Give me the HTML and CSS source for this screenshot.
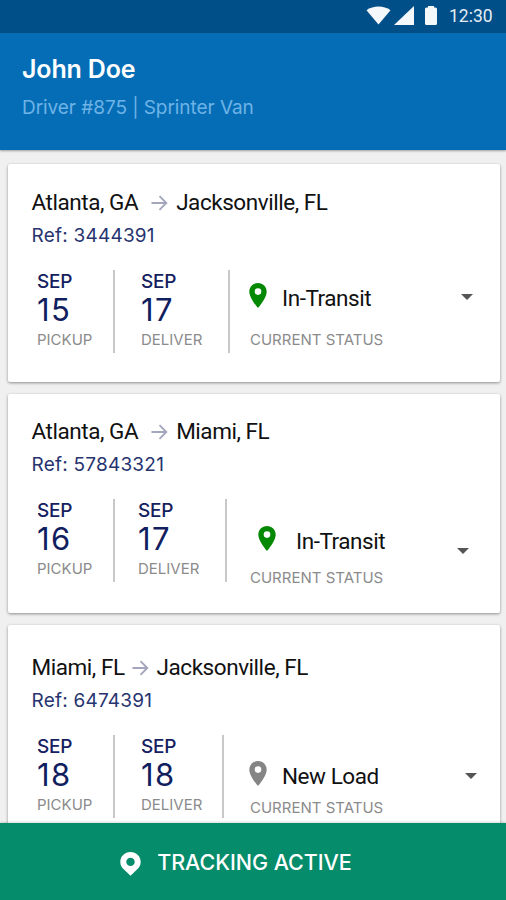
FILE: index.html
```html
<!DOCTYPE html>
<html lang="en">
<head>
<meta charset="utf-8">
<title>Driver loads</title>
<link rel="stylesheet" href="styles.css">
</head>
<body>
<svg width="0" height="0" class="defs" aria-hidden="true">
  <symbol id="pin" viewBox="0 0 18 25"><path fill-rule="evenodd" d="M9 0C4 0 .3 3.900.3 8.700.3 15.200 9 25 9 25s8.700-9.800 8.700-16.300C17.700 3.900 14 0 9 0zm0 5.300a3.300 3.300 0 1 1 0 6.600 3.300 3.300 0 0 1 0-6.600z"/></symbol>
  <symbol id="arrow" viewBox="0 0 17 16"><path d="M.5 8H15M8.500 1.200 15.300 8l-6.800 6.800" fill="none" stroke="currentColor" stroke-width="1.900"/></symbol>
</svg>
<div class="screen">
  <div class="statusbar">
    <svg width="25" height="19" viewBox="0 0 26 20" preserveAspectRatio="none"><path d="M.5 4.500C7.500-.8 18.500-.8 25.500 4.500L13 19.500z"/></svg>
    <svg class="signal" width="20" height="19" viewBox="0 0 20 20" preserveAspectRatio="none"><path d="M20 0v20H0z"/></svg>
    <svg class="battery" width="12" height="19" viewBox="0 0 12 19"><path d="M3 0h6v1.500h1.500Q12 1.500 12 3V17.500q0 1.500-1.500 1.500h-9Q0 19 0 17.500V3q0-1.500 1.500-1.500H3z"/></svg>
    <span class="time">12:30</span>
  </div>
  <header class="header">
    <h1>John Doe</h1>
    <p>Driver #875 | Sprinter Van</p>
  </header>
  <main class="loads">
    <article class="card first">
      <h2><span>Atlanta, GA</span><svg class="arrow wide"><use href="#arrow"/></svg><span>Jacksonville, FL</span></h2>
      <p class="ref">Ref: 3444391</p>
      <div class="details">
        <div class="date"><b>SEP</b><strong>15</strong><small>PICKUP</small></div>
        <div class="date deliver"><b>SEP</b><strong>17</strong><small>DELIVER</small></div>
        <div class="status">
          <div class="state"><svg class="pin"><use href="#pin"/></svg><span>In-Transit</span><i class="caret"></i></div>
          <small>CURRENT STATUS</small>
        </div>
      </div>
    </article>
    <article class="card second">
      <h2><span>Atlanta, GA</span><svg class="arrow wide"><use href="#arrow"/></svg><span>Miami, FL</span></h2>
      <p class="ref">Ref: 57843321</p>
      <div class="details">
        <div class="date"><b>SEP</b><strong>16</strong><small>PICKUP</small></div>
        <div class="date deliver"><b>SEP</b><strong>17</strong><small>DELIVER</small></div>
        <div class="status">
          <div class="state"><svg class="pin"><use href="#pin"/></svg><span>In-Transit</span><i class="caret"></i></div>
          <small>CURRENT STATUS</small>
        </div>
      </div>
    </article>
    <article class="card third">
      <h2><span>Miami, FL</span><svg class="arrow"><use href="#arrow"/></svg><span>Jacksonville, FL</span></h2>
      <p class="ref">Ref: 6474391</p>
      <div class="details">
        <div class="date"><b>SEP</b><strong>18</strong><small>PICKUP</small></div>
        <div class="date deliver"><b>SEP</b><strong>18</strong><small>DELIVER</small></div>
        <div class="status">
          <div class="state"><svg class="pin"><use href="#pin"/></svg><span>New Load</span><i class="caret"></i></div>
          <small>CURRENT STATUS</small>
        </div>
      </div>
    </article>
  </main>
  <footer class="tracking">
    <svg width="21" height="24" viewBox="0 0 21 24"><path fill-rule="evenodd" d="M10.500 0C4.700 0 .3 4.400.3 9.900c0 3.300 1.500 5.700 3.700 7.700l6.500 6.100 6.500-6.100c2.200-2 3.700-4.400 3.700-7.700C20.700 4.400 16.300 0 10.500 0zm0 5.700a4.200 4.200 0 1 1 0 8.400 4.200 4.200 0 0 1 0-8.400z"/></svg>
    <span>TRACKING ACTIVE</span>
  </footer>
</div>
</body>
</html>
```
FILE: styles.css
```css
* { box-sizing: border-box; margin: 0; padding: 0; }
body { font-family: Inter, "Liberation Sans", sans-serif; background: #f0f0f1; }
.defs { display: none; }
.screen { width: 506px; height: 900px; display: flex; flex-direction: column; overflow: hidden; }

.statusbar { height: 33px; flex: none; display: flex; align-items: flex-start; padding: 6px 13px 0 0; justify-content: flex-end; background: #004f88; }
.statusbar svg { fill: #f4f8fb; }
.statusbar .signal { margin-left: 3px; }
.statusbar .battery { margin: 0 0 0 11px; }
.time { margin-left: 12px; width: 44px; font: 17.5px/20px Roboto, sans-serif; color: #e4edf4; white-space: nowrap; }

.header { height: 117px; flex: none; padding: 20px 22px 0; background: #056db6; box-shadow: 0 1px 2px rgba(0, 0, 0, .35); z-index: 1; }
.header h1 { font-size: 25px; line-height: 32px; font-weight: 600; letter-spacing: -.15px; color: #fff; }
.header p { margin-top: 11px; font-size: 19px; line-height: 24px; letter-spacing: -.06px; color: #6db3e6; white-space: nowrap; }

.loads { flex: 1; min-height: 0; overflow: hidden; padding: 14px 6px 0 8px; display: flex; flex-direction: column; gap: 12px; }
.card { --split: 115px; --indent: 26px; --pin-left: 19px; --state-top: 11px; --text-gap: 15px; --caret: 27px; --label-top: 17px;
  flex: none; height: 218px; padding: 24px 0 0 24px; background: #fff; border-radius: 2px; box-shadow: 0 1px 3px rgba(0, 0, 0, .42); }
.card h2 { display: flex; align-items: center; height: 28px; margin-left: -.5px; font: 400 22.5px/28px Roboto, sans-serif; letter-spacing: -.45px; color: #111; white-space: nowrap; }
.arrow { width: 17px; height: 16px; margin: 1px 8px 0 7px; color: #a3a6bd; }
.arrow.wide { margin-left: 13px; margin-right: 8px; }
.ref { margin-top: 8px; margin-left: -.5px; font-size: 19px; line-height: 24px; letter-spacing: .22px; color: #27346f; }
.details { display: flex; height: 83px; margin-top: 22px; }
.date { width: 83px; padding-left: 5px; border-right: 2px solid #c8c8ca; display: flex; flex-direction: column; align-items: flex-start; flex: none; }
.date.deliver { width: var(--split); padding-left: var(--indent); }
.date b { margin-top: 1px; font-size: 19px; font-weight: 500; line-height: 22px; color: #15215f; letter-spacing: -.2px; }
.date strong { font-size: 31px; font-weight: 400; line-height: 34px; color: #10205f; letter-spacing: 1.5px; }
.date small { margin-top: 3px; }
small { font-size: 15px; line-height: 20px; color: #8b8b8b; white-space: nowrap; }
.status { flex: 1; }
.status small { display: block; padding-left: var(--label-left, 20px); margin-top: var(--label-top); }
.state { display: flex; align-items: center; height: 32px; margin-top: var(--state-top); padding: 0 var(--caret) 0 var(--pin-left); font: 22.5px/32px Roboto, sans-serif; letter-spacing: -.45px; color: #111; white-space: nowrap; }
.state span { position: relative; top: .5px; }
.pin { width: 18px; height: 25px; margin: 0 var(--text-gap) 3px 0; fill: #058905; flex: none; }
.caret { margin: var(--caret-top, -1px) 0 0 auto; border: 6.5px solid transparent; border-top-color: #555; border-bottom: 0; }
.second { --split: 112px; --indent: 23px; --pin-left: 31px; --state-top: 25px; --text-gap: 20px; --caret: 31px; --caret-top: 21px; --label-left: 23px; --label-top: 12px; }
.second { height: 219px; }
.second h2 { margin-top: -1px; }
.third { --split: 109px; --pin-left: 25px; --state-top: 24px; --caret: 23px; --caret-top: 1px; --label-left: 26px; --label-top: 7px; padding-top: 28px; }
.third .pin { fill: #858585; }

.tracking { height: 77px; flex: none; display: flex; justify-content: center; padding: 26px 43px 0 0; background: #058c6b; box-shadow: 0 -1px 2px rgba(0, 0, 0, .15); z-index: 1; color: #fff; font-size: 21.5px; line-height: 27px; font-weight: 500; letter-spacing: -.05px; white-space: nowrap; }
.tracking svg { fill: #fff; margin: 3px 16px 0 9px; }
```
